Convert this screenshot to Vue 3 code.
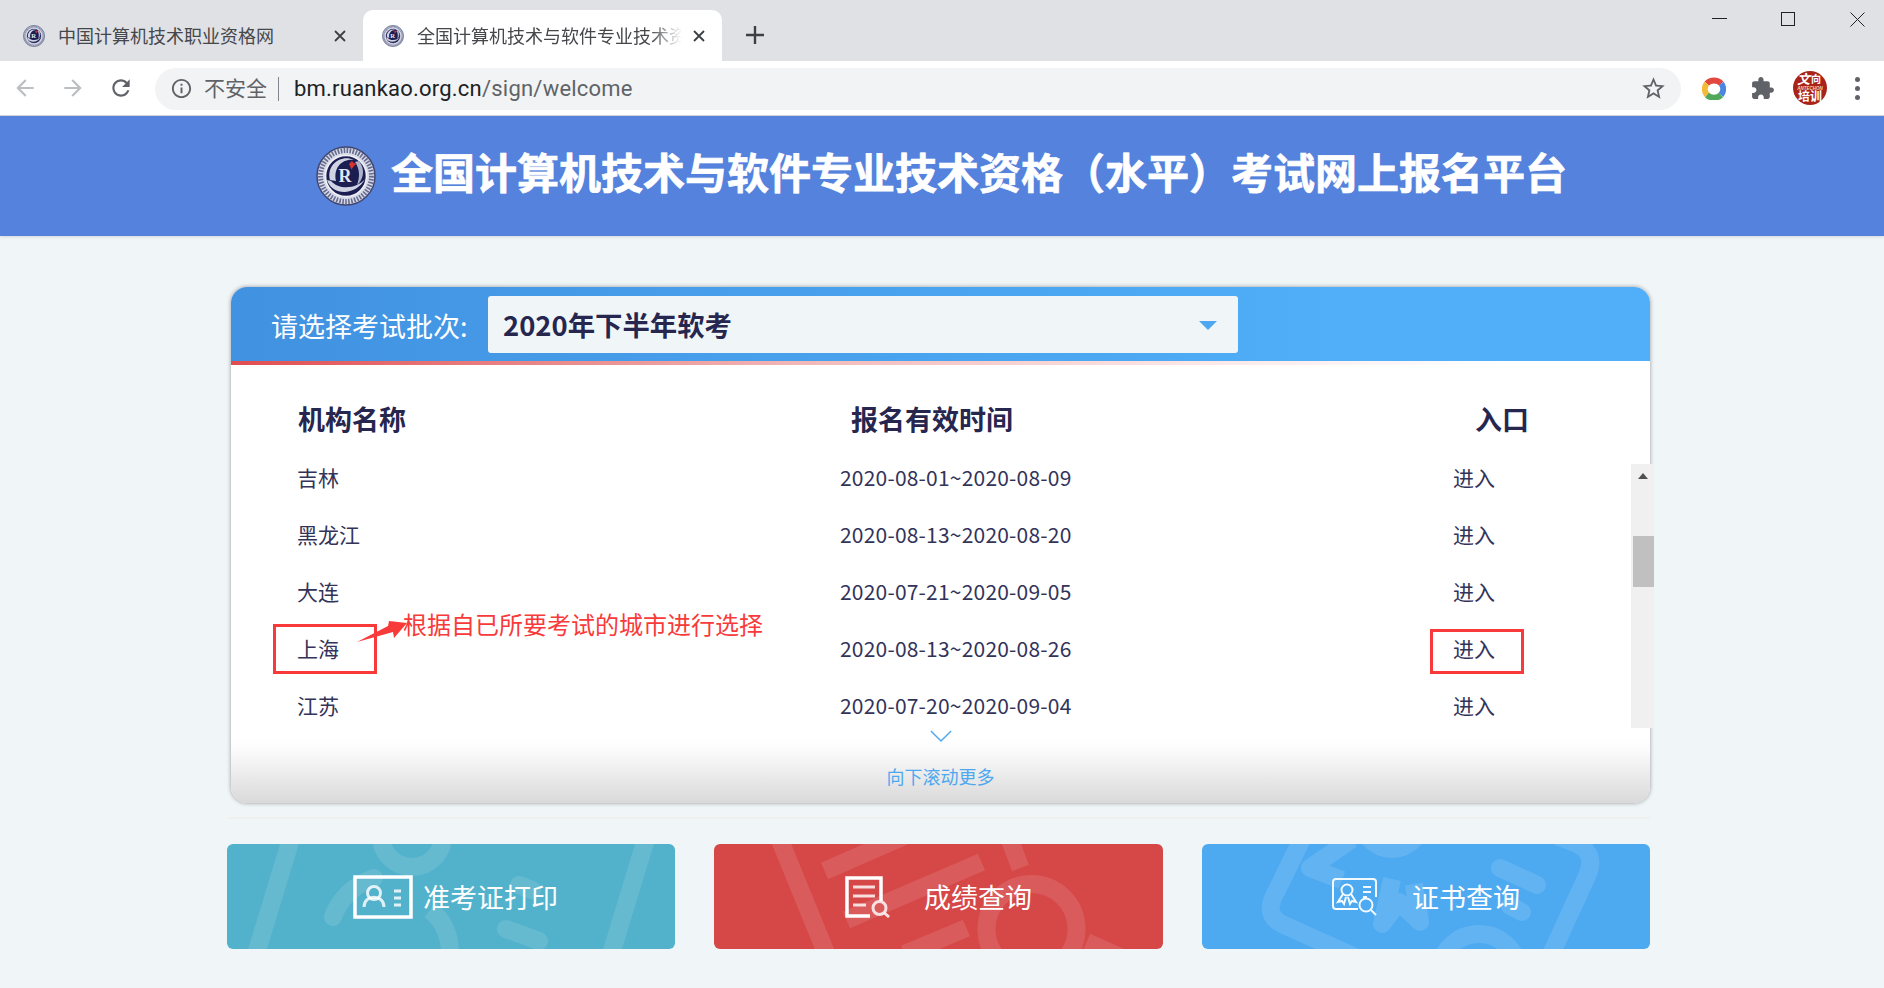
<script setup>
const rows = [
  { name: '吉林', time: '2020-08-01~2020-08-09' },
  { name: '黑龙江', time: '2020-08-13~2020-08-20' },
  { name: '大连', time: '2020-07-21~2020-09-05' },
  { name: '上海', time: '2020-08-13~2020-08-26' },
  { name: '江苏', time: '2020-07-20~2020-09-04' },
]
</script>

<template>
  <div class="page">
    <div class="tabstrip">
      <div class="tab">
        <svg class="favicon" viewBox="0 0 60 60">
          <defs>
            <symbol id="seal" viewBox="0 0 60 60">
              <circle cx="30" cy="30" r="29" fill="#d9dce8" stroke="#41466f" stroke-width="1.5" />
              <circle cx="30" cy="30" r="25.5" fill="none" stroke="#666b90" stroke-width="5" stroke-dasharray="1.6 1.4" />
              <circle cx="30" cy="30" r="20.5" fill="#1c1e52" stroke="#f1f2f8" stroke-width="1.6" />
              <path d="M11 34C16 50 40 50 49 33C42 42 24 45 15 35" fill="#cfd3e2" />
              <path d="M14 34C10 18 26 8 38 14C27 12 17 21 20 35" fill="#cfd3e2" />
              <path d="M43 15C50 24 47 34 41 39C44 31 44 23 39 16" fill="#aeb3cc" />
              <text x="29" y="36" text-anchor="middle" class="seal-r">R</text>
              <path d="M33 18l3-3 1.500 2 3 .5-3 3-2 3z" fill="#d8342c" />
            </symbol>
          </defs>
          <use href="#seal" />
        </svg>
        <span class="tab-title">中国计算机技术职业资格网</span>
        <svg class="tab-close" viewBox="0 0 12 12"><path d="M1 1l10 10M11 1L1 11" /></svg>
      </div>
      <div class="tab active">
        <svg class="favicon" viewBox="0 0 60 60"><use href="#seal" /></svg>
        <span class="tab-title fade">全国计算机技术与软件专业技术资格（水平）考试网上报名平台</span>
        <svg class="tab-close" viewBox="0 0 12 12"><path d="M1 1l10 10M11 1L1 11" /></svg>
      </div>
      <svg class="new-tab" viewBox="0 0 18 18"><path d="M9 0v18M0 9h18" /></svg>
      <div class="window-controls">
        <svg viewBox="0 0 15 15"><path d="M0 6.500h15" /></svg>
        <svg viewBox="0 0 15 15"><rect x=".5" y=".5" width="13" height="13" /></svg>
        <svg viewBox="0 0 15 15"><path d="M.5.500l14 14M14.500.500l-14 14" /></svg>
      </div>
    </div>

    <div class="toolbar">
      <svg class="nav dim" viewBox="0 0 24 24"><path d="M20 11H7.830l5.590-5.590L12 4l-8 8 8 8 1.410-1.410L7.830 13H20v-2z" /></svg>
      <svg class="nav dim" viewBox="0 0 24 24"><path d="M12 4l-1.410 1.410L16.170 11H4v2h12.170l-5.580 5.590L12 20l8-8z" /></svg>
      <svg class="nav" viewBox="0 0 24 24"><path d="M17.650 6.350C16.200 4.900 14.210 4 12 4c-4.420 0-7.990 3.580-7.990 8s3.570 8 7.990 8c3.730 0 6.840-2.550 7.730-6h-2.080c-.82 2.330-3.040 4-5.650 4-3.310 0-6-2.690-6-6s2.690-6 6-6c1.660 0 3.140.69 4.220 1.780L13 11h7V4l-2.350 2.350z" /></svg>
      <div class="omnibox">
        <svg class="info" viewBox="0 0 24 24"><path d="M11 7h2v2h-2zm0 4h2v6h-2zm1-9C6.480 2 2 6.480 2 12s4.480 10 10 10 10-4.480 10-10S17.520 2 12 2zm0 18c-4.410 0-8-3.590-8-8s3.590-8 8-8 8 3.590 8 8-3.590 8-8 8z" /></svg>
        <span class="insecure">不安全</span>
        <i class="omni-sep"></i>
        <span class="url"><b>bm.ruankao.org.cn</b>/sign/welcome</span>
        <svg class="star" viewBox="0 0 24 24"><path d="M22 9.240l-7.190-.62L12 2 9.190 8.630 2 9.240l5.460 4.730L5.820 21 12 17.270 18.180 21l-1.630-7.030L22 9.240zM12 15.400l-3.760 2.270 1-4.280-3.320-2.880 4.380-.38L12 6.100l1.710 4.040 4.380.38-3.320 2.880 1 4.280L12 15.400z" /></svg>
      </div>
      <svg class="ext-ring" viewBox="0 0 24 24">
        <g fill="none" stroke-width="6">
          <path d="M4.700 7.500A10 9.600 0 0 1 19.300 7.500" stroke="#e2483d" />
          <path d="M4.700 7.500A10 9.600 0 0 0 5 19" stroke="#f4bb3b" />
          <path d="M5 19A10 9.600 0 0 0 19 19" stroke="#52a85a" />
          <path d="M19 19A10 9.600 0 0 0 19.300 7.500" stroke="#4a86e0" />
        </g>
      </svg>
      <svg class="ext-puzzle" viewBox="0 0 24 24"><path d="M20.500 11H19V7c0-1.100-.9-2-2-2h-4V3.500C13 2.120 11.880 1 10.500 1S8 2.120 8 3.500V5H4c-1.100 0-1.990.9-1.990 2v3.800H3.500c1.490 0 2.700 1.210 2.700 2.700s-1.210 2.700-2.700 2.700H2V20c0 1.100.9 2 2 2h3.800v-1.500c0-1.490 1.210-2.700 2.700-2.700 1.490 0 2.700 1.210 2.700 2.700V22H17c1.100 0 2-.9 2-2v-4h1.500c1.380 0 2.500-1.120 2.500-2.500S21.880 11 20.500 11z" /></svg>
      <svg class="avatar" viewBox="0 0 34 34">
        <circle cx="17" cy="17" r="17" fill="#a9231a" />
        <text x="4" y="13" class="av-top">文</text>
        <text x="18" y="12" class="av-top2">向</text>
        <text x="17" y="18.500" text-anchor="middle" class="av-mid">ANTECHON</text>
        <text x="17" y="30" text-anchor="middle" class="av-bot">培训</text>
      </svg>
      <div class="menu-dots"><i></i><i></i><i></i></div>
    </div>

    <header class="banner">
      <svg class="banner-logo" viewBox="0 0 60 60"><use href="#seal" /></svg>
      <h1>全国计算机技术与软件专业技术资格（水平）考试网上报名平台</h1>
    </header>

    <main class="main">
      <section class="card">
        <div class="card-head">
          <span class="select-label">请选择考试批次:</span>
          <div class="select">
            <span>2020年下半年软考</span>
            <i class="caret"></i>
          </div>
        </div>
        <div class="red-line"></div>
        <div class="thead">
          <span>机构名称</span>
          <span>报名有效时间</span>
          <span>入口</span>
        </div>
        <div class="list">
          <div v-for="row in rows" :key="row.name" class="row">
            <span>{{ row.name }}</span>
            <span class="time">{{ row.time }}</span>
            <span>进入</span>
          </div>

          <div class="scrollbar">
            <i class="sb-up"></i>
            <i class="sb-thumb"></i>
          </div>

          <div class="mark mark-city"></div>
          <div class="mark mark-enter"></div>
          <svg class="mark-arrow" viewBox="0 0 60 35"><path d="M6 28L37 12l1-5 18 2-13 15-1-6z" /></svg>
          <span class="mark-text">根据自已所要考试的城市进行选择</span>
        </div>
        <div class="card-foot">
          <svg class="chevron" viewBox="0 0 24 14"><path d="M1 1l11 11L23 1" /></svg>
          <span>向下滚动更多</span>
        </div>
      </section>

      <div class="divider"></div>

      <div class="actions">
        <a class="action teal">
          <svg class="wm" viewBox="0 0 448 105">
            <path d="M64 -5L29 110M419 -5L384 110" />
            <circle cx="185" cy="-8" r="31" />
            <path d="M106 73C112 55 128 40 147 34" stroke-linecap="round" />
            <path d="M203 66C216 76 223 90 223 110" />
            <path d="M279 85L312 97M292 41L305 46" stroke-linecap="round" />
          </svg>
          <svg class="ico ico-card" viewBox="0 0 60 44">
            <rect x="2" y="2" width="56" height="40" class="solid" />
            <circle cx="21" cy="18" r="6.500" class="soft" />
            <path d="M11 32C11 19 31 19 31 32" class="soft" />
            <path d="M41 16h7M41 23h7M41 30h7" class="soft" />
          </svg>
          <span>准考证打印</span>
        </a>
        <a class="action red">
          <svg class="wm" viewBox="0 0 448 105">
            <path d="M65 -5L112 110M110 27L190 -8M132 76L267 18M190 110L252 84M295 -5L306 24M372 98L410 115" />
            <circle cx="317" cy="85" r="45" />
          </svg>
          <svg class="ico ico-score" viewBox="0 0 46 42">
            <path d="M25 40H2V2h34v23" class="solid" />
            <path d="M8 11h22M8 20h22M8 29h13" class="soft" />
            <circle cx="34.500" cy="32" r="6.500" class="soft" />
            <path d="M39.500 37L44 41" class="soft" />
          </svg>
          <span>成绩查询</span>
        </a>
        <a class="action blue">
          <svg class="wm" viewBox="0 0 448 105">
            <path d="M100 -5L72 52Q62 72 82 81L180 125M350 -10L375 0Q395 10 385 32L340 130" />
            <path d="M150 -5L108 24L140 36M190 35L180 80L197 58L218 78L212 40" stroke-linejoin="round" />
            <circle cx="190" cy="-25" r="30" />
            <circle cx="277" cy="130" r="40" />
            <path d="M298 24L335 41M308 62L320 68" stroke-linecap="round" />
          </svg>
          <svg class="ico ico-cert" viewBox="0 0 46 38">
            <path d="M24 31H4Q1 31 1 28V4Q1 1 4 1H41Q44 1 44 4V19" class="thin" />
            <circle cx="15" cy="12" r="5.500" class="thin" />
            <path d="M11 16L6 24L10 23L12 26L14 19M19 16L24 24L20 23L18 26L16 19M4 31h22" class="thin" />
            <path d="M31 9h8M31 14h8M31 19h4" class="thin" />
            <circle cx="34" cy="27" r="6.500" class="thin" />
            <path d="M39 32L44 37" class="thin" />
          </svg>
          <span>证书查询</span>
        </a>
      </div>
    </main>
  </div>
</template>

<style>
html,
body {
  margin: 0;
  background: #f0f5f8;
}
</style>

<style scoped>
.page {
  width: 1884px;
  min-height: 988px;
  background: #f0f5f8;
  font-family: "Noto Sans CJK SC", "Noto Sans", sans-serif;
  color: #26264f;
  overflow: hidden;
}

/* browser chrome */
.tabstrip {
  height: 61px;
  background: #dfe1e5;
  display: flex;
  align-items: flex-end;
  position: relative;
  box-sizing: border-box;
}
.tab {
  height: 51px;
  width: 363px;
  box-sizing: border-box;
  padding: 0 17px 0 23px;
  display: flex;
  align-items: center;
  color: #45474b;
  font-size: 18px;
  flex: none;
}
.tab.active {
  width: 359px;
  padding: 0 17px 0 19px;
  background: #fff;
  border-radius: 10px 10px 0 0;
}
.favicon {
  width: 22px;
  height: 24px;
  flex: none;
  margin-right: 13px;
}
.tab.active .favicon {
  margin-right: 13px;
}
.seal-r {
  font: 700 18px "Liberation Serif", serif;
  fill: #e3e6f2;
}
.tab-title {
  flex: 1;
  min-width: 0;
  white-space: nowrap;
  overflow: hidden;
  line-height: 24px;
  margin-top: -2px;
}
.tab-title.fade {
  -webkit-mask-image: linear-gradient(to right, #000 88%, transparent 100%);
  mask-image: linear-gradient(to right, #000 88%, transparent 100%);
}
.tab-close {
  width: 12px;
  height: 12px;
  margin-left: 11px;
  flex: none;
  fill: none;
  stroke: #3c4043;
  stroke-width: 1.800;
}
.new-tab {
  width: 18px;
  height: 18px;
  margin: 0 0 17px 24px;
  fill: none;
  stroke: #3c4043;
  stroke-width: 2.400;
}
.window-controls {
  position: absolute;
  top: 12px;
  right: 19px;
  display: flex;
  gap: 54px;
}
.window-controls svg {
  width: 15px;
  height: 15px;
  fill: none;
  stroke: #222;
  stroke-width: 1;
}

.toolbar {
  height: 54px;
  background: #fff;
  border-bottom: 1px solid #d5d7db;
  display: flex;
  align-items: center;
}
.nav {
  width: 26px;
  height: 26px;
  fill: #5f6368;
  flex: none;
  margin-left: 22px;
}
.nav:first-child {
  margin-left: 12px;
}
.nav.dim {
  fill: #bcbec1;
}
.omnibox {
  width: 1526px;
  height: 42px;
  margin-left: 21px;
  margin-top: 1px;
  background: #f1f3f4;
  border-radius: 21px;
  display: flex;
  align-items: center;
  padding-left: 15px;
  box-sizing: border-box;
  flex: none;
}
.info {
  width: 23px;
  height: 23px;
  fill: #5f6368;
  flex: none;
}
.insecure {
  font-size: 21px;
  color: #5f6368;
  margin-left: 11px;
  line-height: 28px;
  margin-top: -3px;
}
.omni-sep {
  width: 1px;
  height: 24px;
  background: #80868b;
  margin: 0 15px 0 11px;
}
.url {
  font-family: Roboto, sans-serif;
  font-size: 22px;
  color: #5f6368;
  letter-spacing: .22px;
}
.url b {
  font-weight: 400;
  color: #202124;
}
.star {
  width: 27px;
  height: 27px;
  fill: #5f6368;
  margin-left: auto;
  margin-right: 14px;
}
.ext-ring {
  width: 24px;
  height: 24px;
  margin-left: 21px;
  flex: none;
}
.ext-puzzle {
  width: 25px;
  height: 25px;
  fill: #5f6368;
  margin-left: 24px;
  flex: none;
}
.avatar {
  width: 34px;
  height: 34px;
  margin-left: 18px;
  flex: none;
}
.av-top {
  font: italic 700 13px "Noto Sans CJK SC", sans-serif;
  fill: #fff;
}
.av-top2 {
  font: 700 10px "Noto Sans CJK SC", sans-serif;
  fill: #fff;
}
.av-mid {
  font: italic 700 4.500px "Liberation Sans", sans-serif;
  fill: #f5d9b0;
}
.av-bot {
  font: 700 12px "Noto Sans CJK SC", sans-serif;
  fill: #fff;
}
.menu-dots {
  display: flex;
  flex-direction: column;
  gap: 4px;
  margin-left: 28px;
}
.menu-dots i {
  width: 5px;
  height: 5px;
  border-radius: 50%;
  background: #5f6368;
}

/* banner */
.banner {
  height: 120px;
  background: #5482dc;
  display: flex;
  align-items: center;
  padding-left: 316px;
  box-sizing: border-box;
  box-shadow: 0 1px 3px rgba(0, 0, 0, .12);
}
.banner-logo {
  width: 60px;
  height: 60px;
  flex: none;
}
.banner h1 {
  margin: -10px 0 0 15px;
  font-size: 42px;
  line-height: 56px;
  font-weight: 700;
  color: #fff;
  white-space: nowrap;
  -webkit-text-stroke: .7px #fff;
}

/* main */
.main {
  margin-left: 227px;
  width: 1423px;
  padding-top: 51px;
}
.card {
  margin-left: 4px;
  width: 1419px;
  height: 516px;
  background: #fff;
  border-radius: 16px;
  box-shadow: 0 0 4px rgba(0, 0, 0, .38);
  display: flex;
  flex-direction: column;
}
.card-head {
  height: 74px;
  flex: none;
  box-sizing: border-box;
  padding: 9px 0 0 40px;
  border-radius: 16px 16px 0 0;
  background: linear-gradient(to right, #4192e0, #4da9f3 65%, #50aff8 78%);
  display: flex;
  align-items: flex-start;
}
.select-label {
  width: 217px;
  flex: none;
  font-size: 27px;
  line-height: 59px;
  color: #fff;
  white-space: nowrap;
}
.select {
  width: 750px;
  height: 57px;
  background: #f0f5f8;
  border-radius: 3px;
  box-sizing: border-box;
  padding: 0 21px 0 15px;
  display: flex;
  align-items: center;
  justify-content: space-between;
  font-size: 27.400px;
  font-weight: 700;
  line-height: 59px;
  color: #26264f;
}
.caret {
  border-style: solid;
  border-width: 9px 9px 0;
  border-color: #4ea8ef transparent transparent;
  margin-top: 2px;
}
.red-line {
  height: 4px;
  flex: none;
  background: linear-gradient(to right, #e04d50, #f3bcbc 42%, #fdeaea 70%, #fff 90%);
}
.thead {
  height: 99px;
  flex: none;
  box-sizing: border-box;
  padding-top: 34px;
  display: grid;
  grid-template-columns: 553px 624px 1fr;
  padding-left: 67px;
  font-size: 27px;
  font-weight: 700;
  line-height: 40px;
  color: #26264f;
}
.list {
  position: relative;
  height: 264px;
  flex: none;
}
.row {
  height: 57px;
  display: grid;
  grid-template-columns: 543px 613px 1fr;
  padding-left: 66px;
  font-size: 21px;
  line-height: 26px;
  color: #33335a;
}
.time {
  font-size: 21px;
  letter-spacing: .2px;
}
.scrollbar {
  position: absolute;
  top: 0;
  right: -4px;
  width: 23px;
  height: 264px;
  background: #f0f0f0;
}
.sb-up {
  position: absolute;
  top: 9px;
  left: 7px;
  border-style: solid;
  border-width: 0 5.500px 6px;
  border-color: transparent transparent #505050;
}
.sb-thumb {
  position: absolute;
  top: 72px;
  left: 2px;
  right: 0;
  height: 51px;
  background: #c0c0c0;
}
.mark {
  position: absolute;
  box-sizing: border-box;
  border: 3px solid #f83a3a;
}
.mark-city {
  left: 42px;
  top: 160px;
  width: 104px;
  height: 50px;
}
.mark-enter {
  left: 1199px;
  top: 165px;
  width: 94px;
  height: 45px;
}
.mark-arrow {
  position: absolute;
  left: 120px;
  top: 150px;
  width: 60px;
  height: 35px;
  fill: #f83a3a;
}
.mark-text {
  position: absolute;
  left: 172px;
  top: 142px;
  font-size: 24px;
  line-height: 36px;
  color: #f83a3a;
  white-space: nowrap;
}
.card-foot {
  flex: 1;
  border-radius: 0 0 16px 16px;
  background: linear-gradient(to bottom, #fff 12%, #fbfbfb 30%, #d9d9d9 100%);
  display: flex;
  flex-direction: column;
  align-items: center;
  color: #4ea8ef;
  font-size: 18px;
  line-height: 26px;
}
.chevron {
  width: 22px;
  height: 13px;
  fill: none;
  stroke: #4ea8ef;
  stroke-width: 1.600;
  margin-top: 2px;
  margin-bottom: 20px;
}
.divider {
  height: 2px;
  background: #f0f0ee;
  margin-top: 14px;
}
.actions {
  margin-top: 25px;
  display: grid;
  grid-template-columns: 448px 449px 448px;
  gap: 39px;
}
.action {
  position: relative;
  height: 105px;
  border-radius: 6px;
  overflow: hidden;
  display: flex;
  align-items: center;
  color: #fff;
  font-size: 27px;
  line-height: 40px;
}
.action span {
  position: relative;
}
.teal {
  background: #52b2cb;
  padding-left: 126px;
}
.red {
  background: #d64747;
  padding-left: 131px;
}
.blue {
  background: #4eaaf0;
  padding-left: 130px;
}
.wm {
  position: absolute;
  inset: 0;
  width: 100%;
  height: 100%;
  fill: none;
  stroke: #fff;
  stroke-opacity: .11;
  stroke-width: 18;
}
.ico {
  position: relative;
  flex: none;
  fill: none;
}
.solid {
  stroke: #fff;
  stroke-width: 3.500;
}
.soft {
  stroke: #fff;
  stroke-opacity: .82;
  stroke-width: 3;
}
.thin {
  stroke: #fff;
  stroke-opacity: .92;
  stroke-width: 2;
}
.ico-card {
  width: 60px;
  height: 44px;
  margin-right: 10px;
}
.ico-score {
  width: 46px;
  height: 42px;
  margin-right: 33px;
  margin-top: 1px;
}
.ico-cert {
  width: 46px;
  height: 38px;
  margin-right: 34px;
  margin-top: 1px;
}
</style>
